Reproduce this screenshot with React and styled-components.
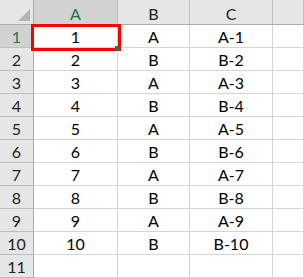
import React from 'react';
import styled, { createGlobalStyle } from 'styled-components';

const Global = createGlobalStyle`
  body {
    margin: 0;
    background: #ffffff;
    font-family: Lato, "Liberation Sans", sans-serif;
  }
`;

const Sheet = styled.div`
  position: relative;
  display: grid;
  grid-template-columns: 34px 84px 72px 83px 1fr;
  grid-template-rows: 25px repeat(11, 23px);
  width: 304px;
  height: 278px;
  overflow: hidden;
`;

const Cell = styled.div`
  box-sizing: border-box;
  display: flex;
  align-items: center;
  justify-content: center;
  border-right: 1px solid #d4d4d4;
  border-bottom: 1px solid #d4d4d4;
  font-size: 16px;
  color: #000;
`;

const Head = styled(Cell)`
  background: ${(p) => (p.$active ? '#d2d2d2' : '#e6e6e6')};
  color: ${(p) => (p.$active ? '#217346' : '#222')};
  border-right-color: ${(p) => (p.$row ? '#ababab' : '#bdbdbd')};
  border-bottom-color: ${(p) => (p.$row ? '#bdbdbd' : '#ababab')};
  padding-top: ${(p) => (p.$row ? 0 : 2)}px;
`;

const Corner = styled(Head)`
  position: relative;
  border-right-color: #ababab;
  &::after {
    content: '';
    position: absolute;
    right: 3px;
    bottom: 3px;
    border-left: 12px solid transparent;
    border-bottom: 12px solid #b4b4b4;
  }
`;

const Selection = styled.div`
  position: absolute;
  left: 31px;
  top: 24px;
  width: 90px;
  height: 27px;
  box-sizing: border-box;
  border: 3px solid #ff0000;
  &::after {
    content: '';
    position: absolute;
    right: -1px;
    bottom: -3px;
    width: 4px;
    height: 5px;
    background: #217346;
  }
`;

const rows = Array.from({ length: 10 }, (_, i) => {
  const n = i + 1;
  const letter = n % 2 ? 'A' : 'B';
  return [String(n), letter, `${letter}-${n}`];
});

export default function App() {
  return (
    <>
      <Global />
      <Sheet>
        <Corner />
        <Head $active>A</Head>
        <Head>B</Head>
        <Head>C</Head>
        <Head />
        {rows.map((r, i) => (
          <React.Fragment key={i}>
            <Head $row $active={i === 0}>{i + 1}</Head>
            {r.map((v, j) => (
              <Cell key={j}>{v}</Cell>
            ))}
            <Cell />
          </React.Fragment>
        ))}
        <Head $row>11</Head>
        <Cell />
        <Cell />
        <Cell />
        <Cell />
        <Selection />
      </Sheet>
    </>
  );
}
